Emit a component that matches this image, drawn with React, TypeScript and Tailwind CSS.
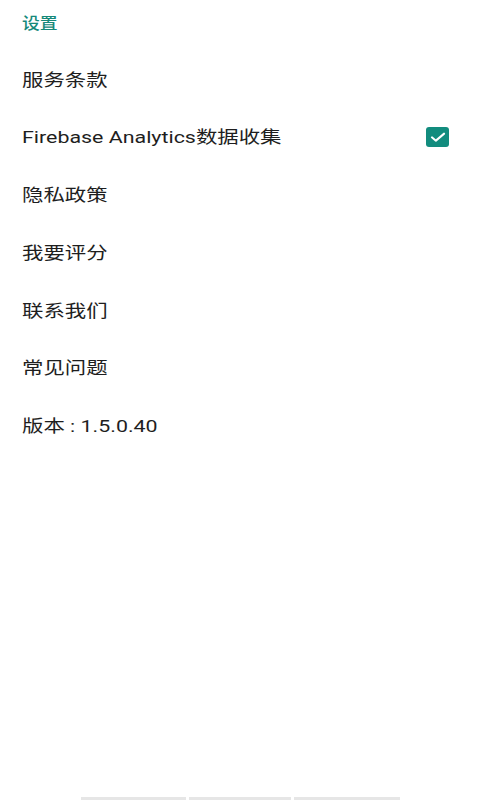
const font = { fontFamily: 'Roboto, "Noto Sans CJK SC", sans-serif' }

const items = ['服务条款', 'Firebase Analytics数据收集', '隐私政策', '我要评分', '联系我们', '常见问题', '版本 : 1.5.0.40']

export default function App() {
  return (
    <div className="w-[480px] h-[800px] bg-white flex flex-col relative overflow-hidden" style={font}>
      <div className="h-[51px] flex items-center px-[22px] pb-[1px]">
        <span className="text-[15.5px] text-[#16897a] font-medium inline-block origin-left scale-x-[1.15]">设置</span>
      </div>
      {items.map((label, i) => (
        <div key={label} className="h-[57.7px] flex items-center justify-between pl-[22px] pr-[31px]">
          <span className="text-[17.4px] text-[#1e1e1e] inline-block origin-left scale-x-[1.23] whitespace-nowrap">{label}</span>
          {i === 1 && (
            <span className="w-[23px] h-[20px] -mt-[2px] rounded-[3px] bg-[#128c7e] flex items-center justify-center">
              <svg viewBox="0 0 24 24" className="w-[18px] h-[16px]" fill="none" stroke="white" strokeWidth="3" strokeLinecap="round" strokeLinejoin="round" preserveAspectRatio="none">
                <path d="M4 12.5l5 5L20 7" />
              </svg>
            </span>
          )}
        </div>
      ))}
      <div className="flex-1" />
      <div className="flex justify-center gap-[3px] h-[3px]">
        <div className="w-[105px] bg-[#e6e6e6]" />
        <div className="w-[102px] bg-[#e6e6e6]" />
        <div className="w-[106px] bg-[#e6e6e6]" />
      </div>
    </div>
  )
}
